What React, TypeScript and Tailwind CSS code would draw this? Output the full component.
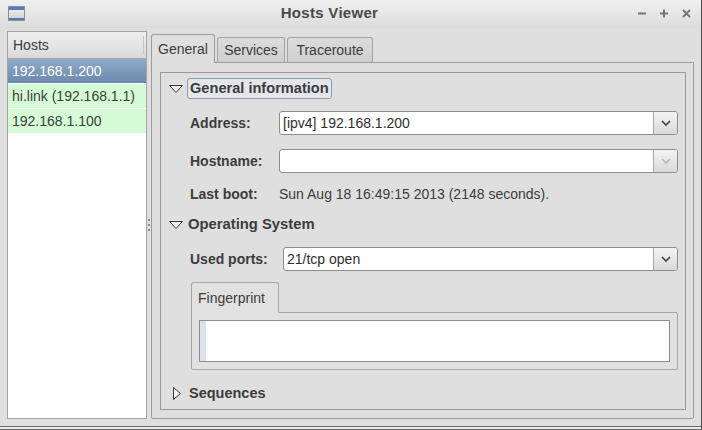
import React from 'react';

const Chevron = ({ disabled }: { disabled?: boolean }) => (
    <svg width="10" height="6" viewBox="0 0 10 6">
        <path d="M1 1 L5 5 L9 1" fill="none" stroke={disabled ? '#b4b4b4' : '#3c3c3c'} strokeWidth="1.6" />
    </svg>
);

const ExpandedArrow = () => (
    <svg width="14" height="8" viewBox="0 0 14 8">
        <polygon points="0.5,0.5 13.5,0.5 7,7.5" fill="#f4f4f4" stroke="#3c3c3c" strokeWidth="1" />
    </svg>
);

const CollapsedArrow = () => (
    <svg width="8" height="13" viewBox="0 0 8 13">
        <polygon points="0.5,0.5 7.5,6.5 0.5,12.5" fill="#f4f4f4" stroke="#3c3c3c" strokeWidth="1" />
    </svg>
);

interface ComboProps {
    value?: string;
    disabled?: boolean;
}

const Combo: React.FC<ComboProps> = ({ value, disabled }) => (
    <div className="flex-1 h-[24px] flex bg-white border border-[#8c8c8c] rounded-[3px] overflow-hidden">
        <div className="flex-1 flex items-center pl-[3px] text-[#2e2e2e] whitespace-nowrap">{value}</div>
        <div className="w-[24px] flex items-center justify-center border-l border-[#a8a8a8] bg-gradient-to-b from-[#f4f4f4] to-[#d9d9d9]">
            <Chevron disabled={disabled} />
        </div>
    </div>
);

const hosts = [
    { label: '192.168.1.200', selected: true },
    { label: 'hi.link (192.168.1.1)' },
    { label: '192.168.1.100' },
];

export default function App() {
    return (
        <div className="w-[702px] h-[430px] bg-[#dfdfdf] flex flex-col border-r border-[#4d4d4d] font-['Liberation_Sans',Arial,sans-serif] text-[14px] text-[#3c3c3c] overflow-hidden">
            {/* title bar */}
            <div className="h-[28px] flex items-center pb-[2px] pl-[8px] pr-[10px] bg-gradient-to-b from-[#f0f0f0] to-[#dcdcdc]">
                <div className="w-[17px] h-[15px] flex flex-col border border-[#8e8e8e] bg-gradient-to-b from-[#f2f2f2] to-[#cfcfcf]">
                    <div className="h-[3px] bg-[#4b7cc4]" />
                    <div className="flex-1" />
                    <div className="h-[2px] bg-[#4b7cc4]" />
                </div>
                <div className="flex-1 text-center font-bold text-[15px] tracking-[0.3px] text-[#4a4a4a] pr-[4px]">Hosts Viewer</div>
                <div className="flex items-center gap-[13px]">
                    <svg width="9" height="9" viewBox="0 0 9 9"><path d="M0 4.5 H8" stroke="#777" strokeWidth="2" /></svg>
                    <svg width="9" height="9" viewBox="0 0 9 9"><path d="M0 4.5 H8 M4 0.5 V8.5" stroke="#777" strokeWidth="2" /></svg>
                    <svg width="9" height="9" viewBox="0 0 9 9"><path d="M1 1 L8 8 M8 1 L1 8" stroke="#777" strokeWidth="2" /></svg>
                </div>
            </div>

            {/* body */}
            <div className="flex-1 flex pl-[7px] pr-[7px] pt-[3px] pb-[7px]">
                {/* host list */}
                <div className="w-[140px] flex flex-col bg-white border border-[#a3a3a3]">
                    <div className="h-[27px] flex items-center pl-[5px] border-b border-[#a8a8a8] bg-gradient-to-b from-[#efefef] to-[#dadada]">
                        <span className="flex-1">Hosts</span>
                        <div className="w-px h-[18px] bg-[#c4c4c4] mr-[2px]" />
                    </div>
                    {hosts.map((h) =>
                        h.selected ? (
                            <div key={h.label} className="h-[24px] flex items-center pl-[4px] text-white bg-gradient-to-b from-[#90aac7] to-[#6b8aae] whitespace-nowrap">
                                {h.label}
                            </div>
                        ) : (
                            <div key={h.label} className="h-[25px] flex items-center pl-[4px] bg-[#d6fcd6] border-t border-white whitespace-nowrap">
                                {h.label}
                            </div>
                        )
                    )}
                </div>

                {/* splitter */}
                <div className="w-[4px] flex flex-col items-center justify-center gap-[3px]">
                    <div className="w-[2px] h-[2px] bg-[#8a8a8a]" />
                    <div className="w-[2px] h-[2px] bg-[#8a8a8a]" />
                    <div className="w-[2px] h-[2px] bg-[#8a8a8a]" />
                </div>

                {/* notebook */}
                <div className="flex-1 flex flex-col pt-[2px]">
                    <div className="flex items-end gap-[2px] h-[29px]">
                        <div className="w-[64px] h-[29px] -mb-px z-10 flex items-start pt-[4px] justify-center bg-[#dfdfdf] border border-b-0 border-[#9c9c9c] rounded-t-[3px]">
                            General
                        </div>
                        <div className="w-[68px] h-[25px] flex items-center justify-center bg-gradient-to-b from-[#dcdcdc] to-[#cfcfcf] border border-b-0 border-[#a3a3a3] rounded-t-[3px]">
                            Services
                        </div>
                        <div className="w-[86px] h-[25px] flex items-center justify-center bg-gradient-to-b from-[#dcdcdc] to-[#cfcfcf] border border-b-0 border-[#a3a3a3] rounded-t-[3px]">
                            Traceroute
                        </div>
                    </div>
                    <div className="flex-1 flex flex-col border border-[#9c9c9c] rounded-b-[2px] pt-[9px] pl-[8px] pr-[7px] pb-[8px]">
                        <div className="flex-1 flex flex-col border border-[#9a9a9a] pr-[7px]">
                            {/* General information */}
                            <div className="flex items-center mt-[5px] pl-[8px] h-[21px]">
                                <ExpandedArrow />
                                <div className="ml-[4px] h-[21px] px-[2px] flex items-center font-bold text-[14.6px] bg-[#e4e6ea] border border-[#8b9ab0] rounded-[3px]">
                                    General information
                                </div>
                            </div>
                            <div className="flex items-center mt-[12px] pl-[29px]">
                                <div className="w-[89px] font-bold">Address:</div>
                                <Combo value="[ipv4] 192.168.1.200" />
                            </div>
                            <div className="flex items-center mt-[14px] pl-[29px]">
                                <div className="w-[89px] font-bold">Hostname:</div>
                                <Combo disabled />
                            </div>
                            <div className="flex items-center mt-[9px] h-[24px] pl-[29px]">
                                <div className="w-[89px] font-bold">Last boot:</div>
                                <div>Sun Aug 18 16:49:15 2013 (2148 seconds).</div>
                            </div>

                            {/* Operating System */}
                            <div className="flex items-center mt-[8px] pl-[8px] h-[21px]">
                                <ExpandedArrow />
                                <div className="ml-[5px] font-bold text-[14.8px]">Operating System</div>
                            </div>
                            <div className="flex items-center mt-[12px] pl-[29px]">
                                <div className="w-[93px] font-bold">Used ports:</div>
                                <Combo value="21/tcp open" />
                            </div>
                            <div className="flex flex-col mt-[11px] ml-[30px]">
                                <div className="w-[88px] h-[31px] -mb-px z-10 flex items-center pl-[6px] bg-[#e1e1e1] border border-b-0 border-[#a6a6a6] rounded-t-[3px]">
                                    Fingerprint
                                </div>
                                <div className="h-[58px] p-[7px] bg-[#e1e1e1] border border-[#a6a6a6] rounded-b-[2px] rounded-tr-[2px]">
                                    <div className="h-full flex bg-white border border-[#8e8e8e]">
                                        <div className="w-[6px] bg-[#dbe2ea]" />
                                    </div>
                                </div>
                            </div>

                            {/* Sequences */}
                            <div className="flex items-center mt-[13px] pl-[12px] h-[21px]">
                                <CollapsedArrow />
                                <div className="ml-[8px] font-bold text-[14.5px]">Sequences</div>
                            </div>
                        </div>
                    </div>
                </div>
            </div>

            {/* bottom edge */}
            <div className="h-[4px] border-t border-[#6a6a6a] border-b bg-[#ececec]" />
        </div>
    );
}
